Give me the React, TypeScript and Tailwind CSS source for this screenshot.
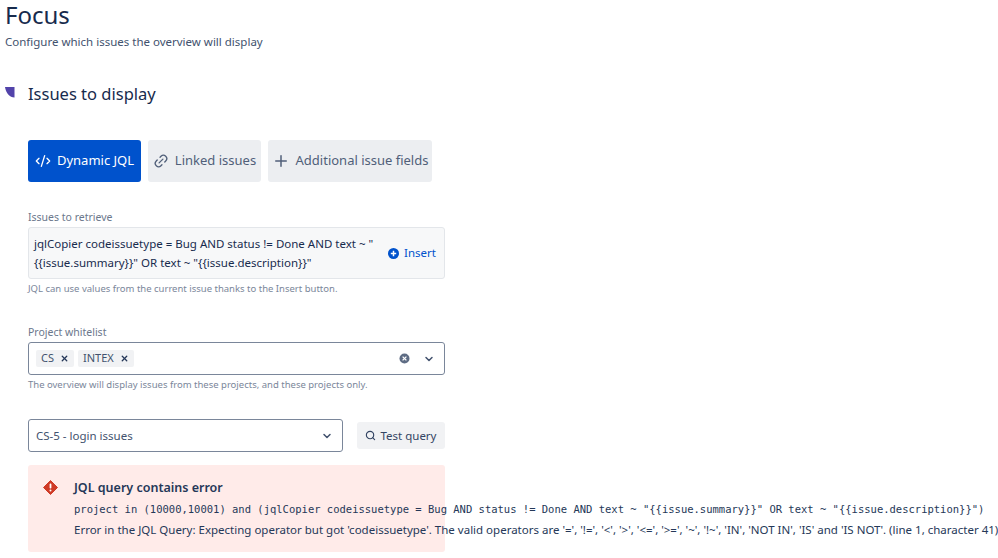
import { ChevronDown, Code2, Link2, Plus, Search, X } from "lucide-react";

const sans = "font-['Noto_Sans','Open_Sans',sans-serif]";

function Tab({ icon, label, active, w }: { icon: React.ReactNode; label: string; active?: boolean; w: string }) {
  return (
    <div className={`flex h-[42px] items-center justify-center gap-[6px] rounded-[3px] text-[13px] ${w} ${active ? "bg-[#0052cc] text-white" : "bg-[#eceef1] text-[#505f79]"}`}>
      {icon}
      <span>{label}</span>
    </div>
  );
}

function Tag({ label }: { label: string }) {
  return (
    <div className="flex h-[17px] items-center gap-[6px] rounded-[2px] bg-[#f1f2f4] pr-[5px] pl-[5px] text-[11px] text-[#42526e]">
      <span>{label}</span>
      <X size={9} strokeWidth={3.5} className="text-[#253858]" />
    </div>
  );
}

export default function App() {
  return (
    <div className={`h-[558px] w-[998px] overflow-hidden bg-white ${sans}`}>
      <div className="pt-[0px] pl-[5px]">
        <h1 className="text-[24px] leading-[29px] text-[#172b4d]">Focus</h1>
        <p className="mt-[5px] text-[11.5px] leading-[16px] text-[#42526e]">Configure which issues the overview will display</p>
      </div>

      <div className="mt-[32px] flex items-center pl-[5px]">
        <svg width="10" height="11" viewBox="0 0 10 11" className="-mt-[3px]">
          <path d="M0 0H9.5V10.5C4.5 10.5 1 6 0 0Z" fill="#5243aa" />
        </svg>
        <h2 className="ml-[13px] text-[16.5px] leading-[24px] text-[#172b4d]">Issues to display</h2>
      </div>

      <div className="mt-[34px] ml-[28px] w-[417px]">
        <div className="flex gap-[7px]">
          <Tab
            active
            w="w-[113px] shrink-0"
            label="Dynamic JQL"
            icon={<Code2 size={16} strokeWidth={2} />}
          />
          <Tab w="w-[113px] shrink-0" label="Linked issues" icon={<Link2 size={16} strokeWidth={2} className="-rotate-45" />} />
          <Tab w="w-[164px] shrink-0" label="Additional issue fields" icon={<Plus size={18} strokeWidth={2} />} />
        </div>

        <label className="mt-[28px] block text-[10.5px] leading-[14px] text-[#6b778c]">Issues to retrieve</label>
        <div className="mt-[3px] flex h-[52px] items-center rounded-[3px] border border-[#e3e6ea] bg-[#f7f8f9] pr-[8px] pl-[5px]">
          <div className="w-[352px] text-[11.5px] leading-[19.5px] text-[#172b4d]">
            jqlCopier codeissuetype = Bug AND status != Done AND text ~ "{"{{"}issue.summary{"}}"}" OR text ~ "{"{{"}issue.description{"}}"}"
          </div>
          <div className="ml-auto flex items-center gap-[5px] text-[11.5px] text-[#0052cc]">
            <svg width="11" height="11" viewBox="0 0 11 11">
              <circle cx="5.5" cy="5.5" r="5.5" fill="#0052cc" />
              <path d="M5.5 2.8v5.4M2.8 5.5h5.4" stroke="#fff" strokeWidth="1.5" />
            </svg>
            <span>Insert</span>
          </div>
        </div>
        <p className="mt-[3px] text-[9.5px] leading-[14px] text-[#7a869a]">JQL can use values from the current issue thanks to the Insert button.</p>

        <label className="mt-[29px] block text-[10.5px] leading-[14px] text-[#6b778c]">Project whitelist</label>
        <div className="mt-[3px] flex h-[33px] items-center gap-[4px] rounded-[3px] border border-[#7a869a] bg-white pr-[9px] pl-[7px]">
          <Tag label="CS" />
          <Tag label="INTEX" />
          <svg width="11" height="11" viewBox="0 0 11 11" className="mr-[9px] ml-auto">
            <circle cx="5.5" cy="5.5" r="5" fill="#5e6c84" />
            <path d="M3.6 3.6l3.8 3.8M7.4 3.6l-3.8 3.8" stroke="#fff" strokeWidth="1.3" />
          </svg>
          <ChevronDown size={12} strokeWidth={3} className="text-[#42526e]" />
        </div>
        <p className="mt-[3px] text-[9.5px] leading-[14px] text-[#7a869a]">The overview will display issues from these projects, and these projects only.</p>

        <div className="mt-[27px] flex items-center justify-between">
          <div className="flex h-[33px] w-[315px] items-center justify-between rounded-[3px] border border-[#7a869a] bg-white pr-[9px] pl-[7px] text-[11.5px] text-[#42526e]">
            <span>CS-5 - login issues</span>
            <ChevronDown size={12} strokeWidth={3} className="text-[#42526e]" />
          </div>
          <div className="flex h-[27px] w-[88px] items-center justify-center gap-[4px] rounded-[3px] bg-[#f1f2f4] text-[11.5px] text-[#344563]">
            <Search size={11} strokeWidth={2.5} />
            <span>Test query</span>
          </div>
        </div>

        <div className="mt-[13px] flex h-[87px] rounded-[3px] bg-[#ffebe9] pt-[15px] pl-[15px]">
          <svg width="15" height="15" viewBox="0 0 15 15" className="shrink-0">
            <path d="M7.5 0.5L14.5 7.5L7.5 14.5L0.5 7.5Z" fill="#cf3a26" stroke="#cf3a26" strokeLinejoin="round" />
            <rect x="6.6" y="3.6" width="1.8" height="5" rx=".8" fill="#fff" />
            <circle cx="7.5" cy="10.6" r="1" fill="#fff" />
          </svg>
          <div className="ml-[16px] whitespace-nowrap">
            <div className="text-[12.5px] leading-[16px] font-semibold text-[#253858]">JQL query contains error</div>
            <div className="mt-[6px] font-['DejaVu_Sans_Mono',monospace] text-[10.5px] leading-[15px] text-[#253858]">
              project in (10000,10001) and (jqlCopier codeissuetype = Bug AND status != Done AND text ~ "{"{{"}issue.summary{"}}"}" OR text ~ "{"{{"}issue.description{"}}"}")
            </div>
            <div className="mt-[5px] text-[11.5px] leading-[15px] text-[#253858]">
              Error in the JQL Query: Expecting operator but got 'codeissuetype'. The valid operators are '=', '!=', '&lt;', '&gt;', '&lt;=', '&gt;=', '~', '!~', 'IN', 'NOT IN', 'IS' and 'IS NOT'. (line 1, character 41)
            </div>
          </div>
        </div>
      </div>
    </div>
  );
}
